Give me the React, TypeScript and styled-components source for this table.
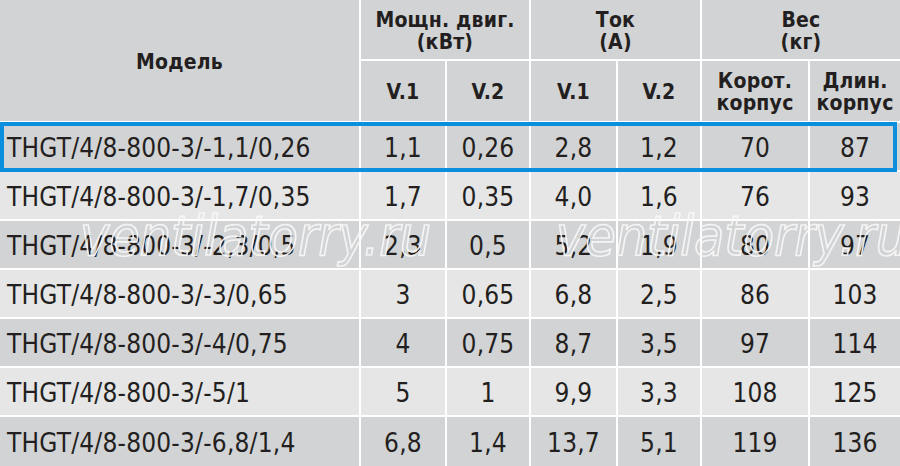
import React from "react";
import styled, { createGlobalStyle } from "styled-components";

const GlobalStyle = createGlobalStyle`
  html, body {
    margin: 0;
    padding: 0;
    background: #ffffff;
  }
`;

const FONT = `"Liberation Sans Narrow", "DejaVu Sans Condensed", "Liberation Sans", sans-serif`;

const rows: string[][] = [
  ["THGT/4/8-800-3/-1,1/0,26", "1,1", "0,26", "2,8", "1,2", "70", "87"],
  ["THGT/4/8-800-3/-1,7/0,35", "1,7", "0,35", "4,0", "1,6", "76", "93"],
  ["THGT/4/8-800-3/-2,3/0,5", "2,3", "0,5", "5,2", "1,9", "80", "97"],
  ["THGT/4/8-800-3/-3/0,65", "3", "0,65", "6,8", "2,5", "86", "103"],
  ["THGT/4/8-800-3/-4/0,75", "4", "0,75", "8,7", "3,5", "97", "114"],
  ["THGT/4/8-800-3/-5/1", "5", "1", "9,9", "3,3", "108", "125"],
  ["THGT/4/8-800-3/-6,8/1,4", "6,8", "1,4", "13,7", "5,1", "119", "136"],
];

function App() {
  return (
    <>
      <GlobalStyle />
      <Wrapper>
        <Table>
          <HeadCell $rowSpan={2}>Модель</HeadCell>
          <HeadCell $colSpan={2}>
            Мощн. двиг.
            <br />
            (кВт)
          </HeadCell>
          <HeadCell $colSpan={2}>
            Ток
            <br />
            (А)
          </HeadCell>
          <HeadCell $colSpan={2}>
            Вес
            <br />
            (кг)
          </HeadCell>
          <HeadCell>V.1</HeadCell>
          <HeadCell>V.2</HeadCell>
          <HeadCell>V.1</HeadCell>
          <HeadCell>V.2</HeadCell>
          <HeadCell>
            Корот.
            <br />
            корпус
          </HeadCell>
          <HeadCell>
            Длин.
            <br />
            корпус
          </HeadCell>

          {rows.map((row, i) =>
            row.map((value, j) =>
              j === 0 ? (
                <ModelCell key={`${i}-${j}`} $dark={i % 2 === 0}>
                  {value}
                </ModelCell>
              ) : (
                <ValueCell key={`${i}-${j}`} $dark={i % 2 === 0}>
                  {value}
                </ValueCell>
              )
            )
          )}
        </Table>

        <Highlight />
        <Watermark $left={80}>ventilatorry.ru</Watermark>
        <Watermark $left={556}>ventilatorry.ru</Watermark>
      </Wrapper>
    </>
  );
}

const Wrapper = styled.div`
  position: relative;
  width: 900px;
  height: 466px;
  overflow: hidden;
  background: #ffffff;
`;

const Table = styled.div`
  display: grid;
  grid-template-columns: 359px 84px 82px 85px 82px 106px 90px;
  grid-template-rows: 59px 60px repeat(6, 47px) 49px;
  gap: 2px;
  font-family: ${FONT};
  color: #231f20;
`;

const HeadCell = styled.div<{ $rowSpan?: number; $colSpan?: number }>`
  grid-row: span ${(p) => p.$rowSpan ?? 1};
  grid-column: span ${(p) => p.$colSpan ?? 1};
  display: flex;
  align-items: center;
  justify-content: center;
  text-align: center;
  background: #d2d3d5;
  font-size: 21px;
  font-weight: 700;
  line-height: 22px;
  letter-spacing: 0.2px;
  padding-top: 2px;
`;

const BodyCell = styled.div<{ $dark: boolean }>`
  display: flex;
  align-items: center;
  background: ${(p) => (p.$dark ? "#d2d3d5" : "#e6e6e7")};
  font-size: 26px;
  letter-spacing: 0.2px;
  padding-top: 2px;
`;

const ModelCell = styled(BodyCell)`
  padding-left: 7px;
`;

const ValueCell = styled(BodyCell)`
  justify-content: center;
`;

const Highlight = styled.div`
  position: absolute;
  left: 0;
  top: 122px;
  width: 897px;
  height: 50px;
  box-sizing: border-box;
  border: 4px solid #0a8ede;
  pointer-events: none;
`;

const Watermark = styled.div<{ $left: number }>`
  position: absolute;
  left: ${(p) => p.$left}px;
  top: 204px;
  font-family: ${FONT};
  font-style: italic;
  font-size: 55px;
  color: transparent;
  -webkit-text-stroke: 1.6px rgba(248, 248, 248, 0.9);
  pointer-events: none;
  white-space: nowrap;
`;

export default App;
